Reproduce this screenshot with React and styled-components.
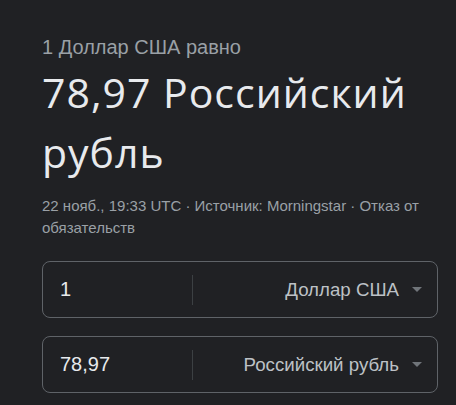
import React from "react";
import styled, { createGlobalStyle } from "styled-components";

const Global = createGlobalStyle`
  html, body { margin: 0; padding: 0; background: #202124; }
  body { font-family: "Liberation Sans", Arial, sans-serif; }
`;

const Card = styled.div`
  width: 456px;
  height: 405px;
  box-sizing: border-box;
  padding: 35px 18px 0 42px;
  background: #202124;
  overflow: hidden;
`;

const Lead = styled.div`
  font-size: 20px;
  line-height: 24px;
  color: #9aa0a6;
`;

const Result = styled.div`
  margin-top: 3px;
  font-family: "Open Sans", Roboto, sans-serif;
  font-size: 41px;
  letter-spacing: 1px;
  line-height: 60px;
  color: #e8eaed;
`;

const Meta = styled.div`
  margin-top: 13px;
  font-size: 15px;
  line-height: 22px;
  color: #9aa0a6;
`;

const Converter = styled.div`
  margin-top: 22px;
  display: flex;
  flex-direction: column;
  gap: 18px;
`;

const Field = styled.div`
  height: 57px;
  box-sizing: border-box;
  border: 1px solid #5f6368;
  border-radius: 8px;
  display: flex;
  align-items: center;
`;

const Amount = styled.div`
  width: 149px;
  box-sizing: border-box;
  padding-left: 17px;
  font-size: 20px;
  color: #e8eaed;
`;

const Divider = styled.div`
  width: 1px;
  height: 30px;
  background: #3c4043;
`;

const Select = styled.div`
  flex: 1;
  display: flex;
  justify-content: flex-end;
  align-items: center;
  gap: 13px;
  padding-right: 15px;
  font-size: 18.7px;
  color: #bdc1c6;
`;

const Arrow = styled.span`
  width: 0;
  height: 0;
  border-left: 5px solid transparent;
  border-right: 5px solid transparent;
  border-top: 5px solid #70757a;
`;

const rows = [
  { amount: "1", currency: "Доллар США" },
  { amount: "78,97", currency: "Российский рубль" },
];

export default function App() {
  return (
    <>
      <Global />
      <Card>
        <Lead>1 Доллар США равно</Lead>
        <Result>78,97 Российский рубль</Result>
        <Meta>22 нояб., 19:33 UTC · Источник: Morningstar · Отказ от обязательств</Meta>
        <Converter>
          {rows.map((r) => (
            <Field key={r.currency}>
              <Amount>{r.amount}</Amount>
              <Divider />
              <Select>
                {r.currency}
                <Arrow />
              </Select>
            </Field>
          ))}
        </Converter>
      </Card>
    </>
  );
}
